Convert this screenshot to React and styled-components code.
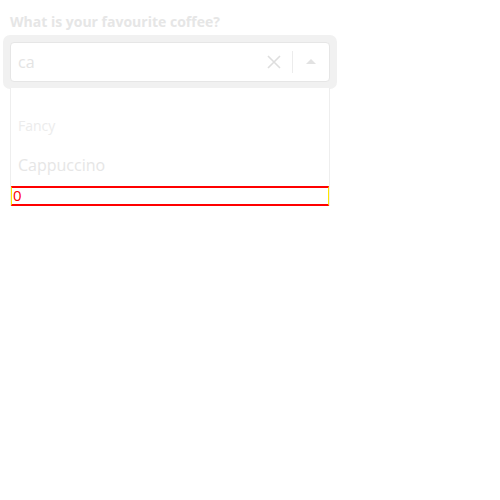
import React from "react";
import styled, { createGlobalStyle } from "styled-components";

const Global = createGlobalStyle`
  body {
    margin: 0;
    background: #fff;
    font-family: "Open Sans", "Noto Sans", sans-serif;
  }
`;

const Page = styled.div`
  padding: 10px 10px;
  width: 320px;
`;

const Label = styled.div`
  font-size: 14px;
  font-weight: 700;
  color: #e6e6e6;
  line-height: 24px;
  margin-bottom: 1px;
`;

const Ring = styled.div`
  margin: 0 -7px;
  padding: 7px;
  border-radius: 7px;
  background: #f1f1f1;
`;

const Control = styled.div`
  display: flex;
  align-items: center;
  height: 40px;
  box-sizing: border-box;
  border: 1px solid #e6e6e6;
  border-radius: 4px;
  background: #fff;
  padding-left: 7px;
`;

const Value = styled.span`
  flex: 1;
  font-size: 16px;
  color: #e4e4e4;
`;

const IconBox = styled.div`
  width: 36px;
  height: 38px;
  display: flex;
  align-items: center;
  justify-content: center;
`;

const Sep = styled.div`
  width: 1px;
  height: 22px;
  background: #ececec;
`;

const Menu = styled.div`
  margin-top: -1px;
  border: 1px solid #eeeeee;
  border-top: none;
  border-bottom: none;
  background: #fff;
  padding-top: 21px;
`;

const GroupTitle = styled.div`
  padding: 0 7px;
  font-size: 14px;
  color: #ececec;
  line-height: 34px;
`;

const Option = styled.div`
  padding: 0 7px;
  font-size: 16px;
  color: #e6e6e6;
  line-height: 43px;
  padding-top: 2px;
  line-height: 41px;
`;

const Marked = styled.div`
  height: 20px;
  box-sizing: border-box;
  border-top: 2px solid #ff0000;
  border-bottom: 2px solid #ff0000;
  border-left: 1px solid #ffe600;
  border-right: 1px solid #ffe600;
  font-size: 15px;
  line-height: 15px;
  color: #ff0000;
  padding-left: 1px;
`;

export default function App() {
  return (
    <Page>
      <Global />
      <Label>What is your favourite coffee?</Label>
      <Ring>
        <Control>
          <Value>ca</Value>
          <IconBox>
            <svg width="16" height="16" viewBox="0 0 16 16">
              <path d="M2 2 L14 14 M14 2 L2 14" stroke="#dedede" strokeWidth="1.6" />
            </svg>
          </IconBox>
          <Sep />
          <IconBox>
            <svg width="12" height="8" viewBox="0 0 12 8">
              <path d="M1 6 L6 1 L11 6 Z" fill="#e2e2e2" />
            </svg>
          </IconBox>
        </Control>
      </Ring>
      <Menu>
        <GroupTitle>Fancy</GroupTitle>
        <Option>Cappuccino</Option>
        <Marked>0</Marked>
      </Menu>
    </Page>
  );
}
